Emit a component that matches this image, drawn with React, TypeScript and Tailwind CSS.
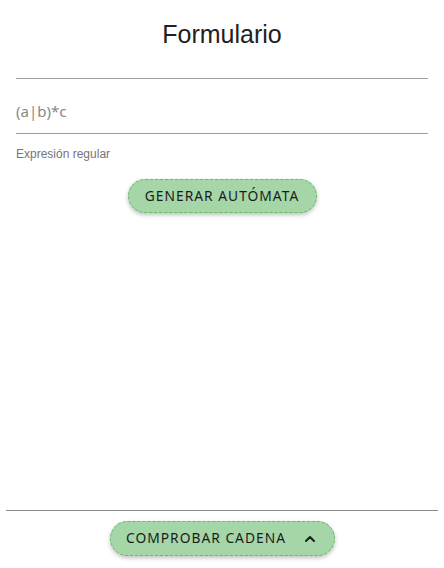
import { ChevronUp } from 'lucide-react'

export default function App() {
  return (
    <div className="w-[444px] h-[568px] bg-white flex flex-col overflow-hidden">
      <div className="px-4 flex flex-col">
        <h1 className="text-center text-[25px] text-[#212121] mt-[19px] leading-[30px] font-['Liberation_Sans',Arial,sans-serif]">
          Formulario
        </h1>
        <div className="mt-[29px] border-t border-[#9e9e9e]" />
        <div className="h-[55px] flex items-center pt-[10px] border-b border-[#9e9e9e]">
          <span className="text-[15px] text-[#888] font-['Noto_Sans',sans-serif]">(a|b)*c</span>
        </div>
        <p className="mt-[12px] text-[12px] text-[#757575] leading-[16px] font-['Liberation_Sans',Arial,sans-serif]">
          Expresión regular
        </p>
        <div className="flex justify-center mt-[17px]">
          <button className="w-[189px] h-[34px] rounded-full bg-[#a5d6a7] border border-dashed border-[#66bb6a] shadow-[0_2px_4px_rgba(0,0,0,0.25)] text-[13.8px] tracking-[1px] text-[#1b1b1b] font-['Noto_Sans',sans-serif]">
            GENERAR AUTÓMATA
          </button>
        </div>
      </div>
      <div className="flex-1" />
      <div className="mx-[6px] border-t border-[#8a8a8a]" />
      <div className="flex justify-center pt-[10px] pb-[12px]">
        <button className="w-[225px] h-[35px] rounded-full bg-[#a5d6a7] border border-dashed border-[#66bb6a] shadow-[0_2px_4px_rgba(0,0,0,0.25)] flex items-center justify-center gap-[16px] text-[13.8px] tracking-[1px] text-[#1b1b1b] font-['Noto_Sans',sans-serif]">
          <span>COMPROBAR CADENA</span>
          <ChevronUp size={16} strokeWidth={3} />
        </button>
      </div>
    </div>
  )
}
